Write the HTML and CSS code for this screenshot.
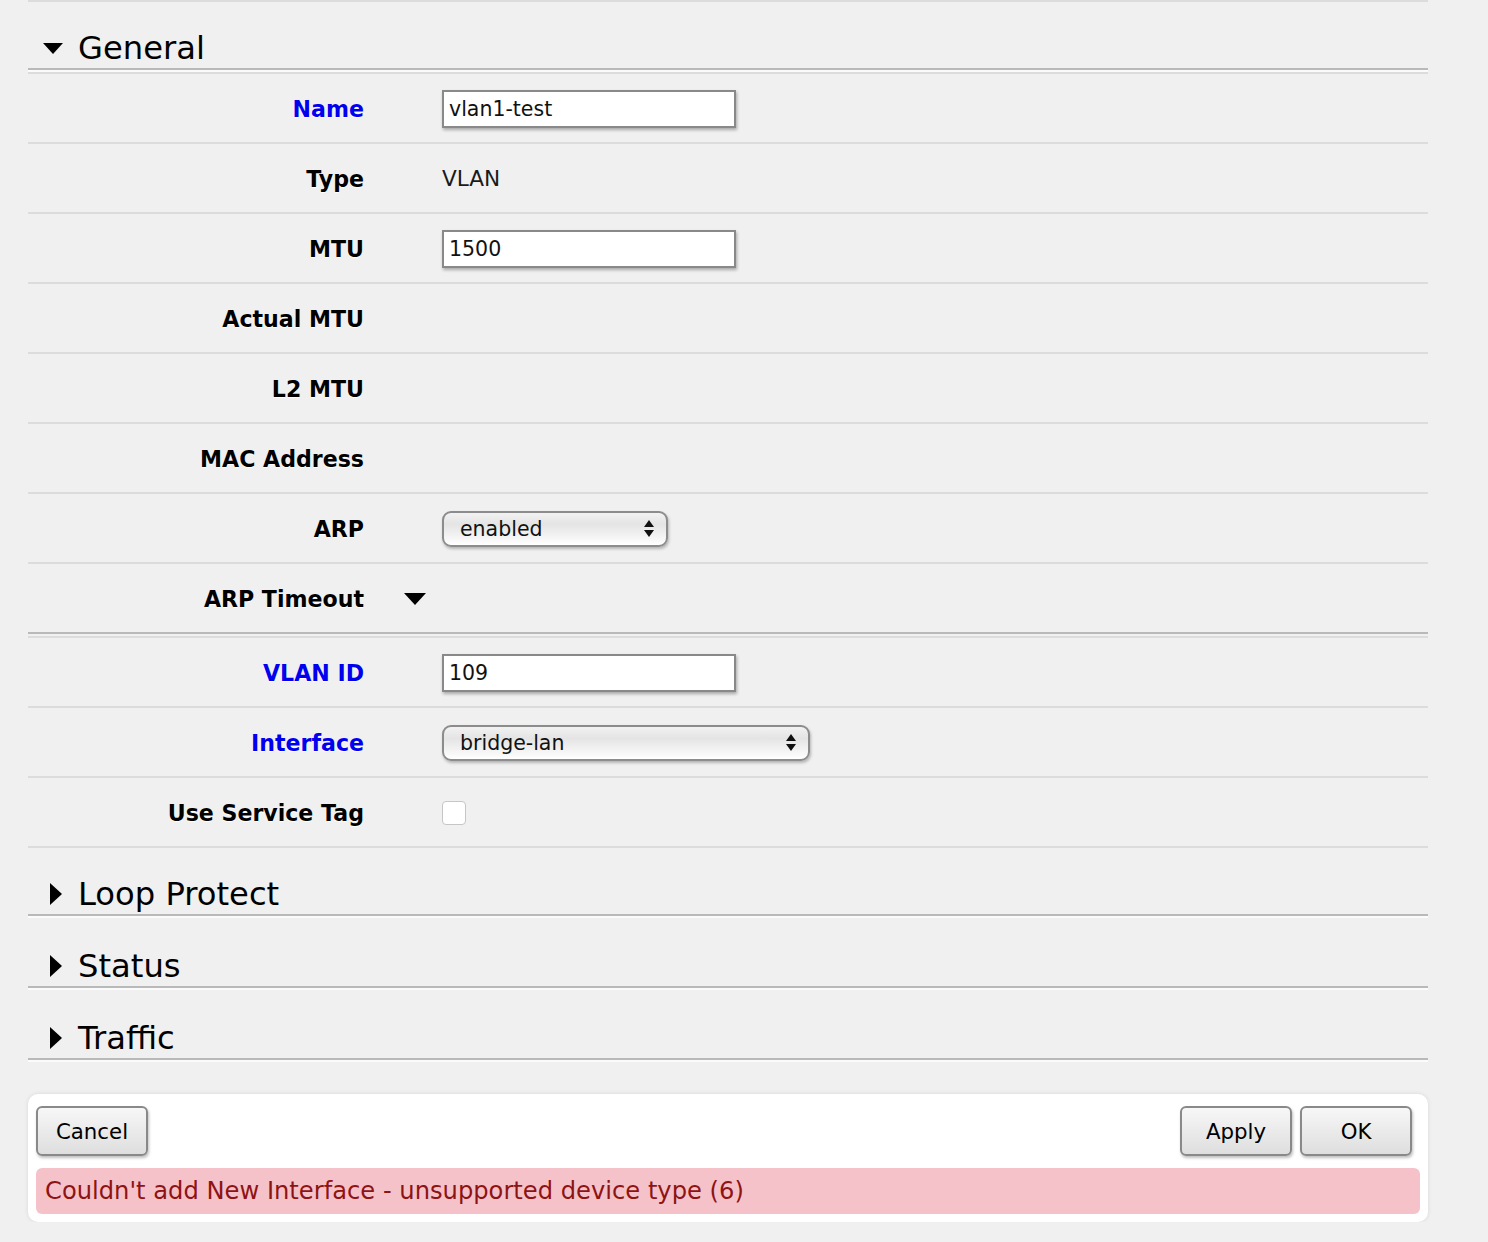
FILE: index.html
```html
<!DOCTYPE html>
<html lang="en">
<head>
    <meta charset="UTF-8">
    <meta name="viewport" content="width=device-width, initial-scale=1.0">
    <title>Interface &lt;vlan1-test&gt;</title>
    <link rel="stylesheet" href="styles.css">
</head>
<body>
    <div class="form">
        <div class="top-rule"></div>

        <div class="section open">
            <div class="section-head"><span class="toggle"><span class="tri-down"></span></span>General</div>
            <div class="section-body">
                <div class="row">
                    <label class="req">Name</label>
                    <div class="gap-cell"></div>
                    <div class="value"><input class="text" type="text" value="vlan1-test"></div>
                </div>
                <div class="row">
                    <label>Type</label>
                    <div class="gap-cell"></div>
                    <div class="value">VLAN</div>
                </div>
                <div class="row">
                    <label>MTU</label>
                    <div class="gap-cell"></div>
                    <div class="value"><input class="text" type="text" value="1500"></div>
                </div>
                <div class="row">
                    <label>Actual MTU</label>
                    <div class="gap-cell"></div>
                    <div class="value"></div>
                </div>
                <div class="row">
                    <label>L2 MTU</label>
                    <div class="gap-cell"></div>
                    <div class="value"></div>
                </div>
                <div class="row">
                    <label>MAC Address</label>
                    <div class="gap-cell"></div>
                    <div class="value"></div>
                </div>
                <div class="row">
                    <label>ARP</label>
                    <div class="gap-cell"></div>
                    <div class="value">
                        <div class="select small">
                            <span>enabled</span>
                            <svg class="arrows" width="10" height="18" viewBox="0 0 10 18"><path d="M5 0 L10 7 L0 7 Z M0 10 L10 10 L5 17 Z" fill="#111"/></svg>
                        </div>
                    </div>
                </div>
                <div class="row sub-head">
                    <label>ARP Timeout</label>
                    <div class="gap-cell"><span class="tri-sub"></span></div>
                    <div class="value"></div>
                </div>
                <div class="sub-body">
                    <div class="row">
                        <label class="req">VLAN ID</label>
                        <div class="gap-cell"></div>
                        <div class="value"><input class="text" type="text" value="109"></div>
                    </div>
                    <div class="row">
                        <label class="req">Interface</label>
                        <div class="gap-cell"></div>
                        <div class="value">
                            <div class="select wide">
                                <span>bridge-lan</span>
                                <svg class="arrows" width="10" height="18" viewBox="0 0 10 18"><path d="M5 0 L10 7 L0 7 Z M0 10 L10 10 L5 17 Z" fill="#111"/></svg>
                            </div>
                        </div>
                    </div>
                    <div class="row">
                        <label>Use Service Tag</label>
                        <div class="gap-cell"></div>
                        <div class="value"><span class="checkbox"></span></div>
                    </div>
                </div>
            </div>
        </div>

        <div class="section">
            <div class="section-head"><span class="toggle"><span class="tri-right"></span></span>Loop Protect</div>
        </div>
        <div class="section">
            <div class="section-head"><span class="toggle"><span class="tri-right"></span></span>Status</div>
        </div>
        <div class="section">
            <div class="section-head"><span class="toggle"><span class="tri-right"></span></span>Traffic</div>
        </div>
    </div>

    <div class="panel">
        <div class="buttons">
            <button class="btn">Cancel</button>
            <div class="buttons-right">
                <button class="btn">Apply</button>
                <button class="btn">OK</button>
            </div>
        </div>
        <div class="error">Couldn't add New Interface - unsupported device type (6)</div>
    </div>
</body>
</html>
```

FILE: styles.css
```css
* {
    box-sizing: border-box;
}

body {
    margin: 0;
    background: #f0f0f0;
    font-family: 'DejaVu Sans', Verdana, sans-serif;
    color: #000;
}

.form {
    width: 1400px;
    margin-left: 28px;
}

.top-rule {
    height: 2px;
    background: #dcdcdc;
}

/* section headers */
.section-head {
    display: flex;
    align-items: flex-end;
    height: 68px;
    padding-bottom: 1px;
    border-bottom: 2px solid #b9b9b9;
    box-shadow: 0 2px 0 #fbfbfb;
    font-size: 32.2px;
    line-height: 38px;
    margin-bottom: 4px;
}

.section.open .section-head {
    margin-bottom: 2px;
}

.toggle {
    display: flex;
    justify-content: flex-end;
    align-items: center;
    width: 35px;
    height: 38px;
    margin-right: 15px;
}

.tri-down {
    width: 0;
    height: 0;
    border-left: 10px solid transparent;
    border-right: 10px solid transparent;
    border-top: 11px solid #000;
}

.tri-right {
    width: 0;
    height: 0;
    margin-right: 1px;
    border-top: 11px solid transparent;
    border-bottom: 11px solid transparent;
    border-left: 12px solid #000;
}

.section-body {
    border-top: 2px solid #dcdcdc;
}

/* rows */
.row {
    display: grid;
    grid-template-columns: 336px 78px 1fr;
    align-items: center;
    height: 70px;
    padding-top: 1px;
    border-bottom: 2px solid #dcdcdc;
}

.row label {
    text-align: right;
    font-weight: bold;
    font-size: 22.1px;
    text-shadow: 0 1px 1px #fff;
}

.row label.req {
    color: #0000ee;
}

.value {
    font-size: 21.6px;
    color: #1a1a1a;
    display: flex;
    align-items: center;
}

.sub-head {
    border-bottom-color: #b9b9b9;
    margin-bottom: 2px;
}

.gap-cell {
    display: flex;
    align-items: center;
    padding-left: 40px;
}

.tri-sub {
    width: 0;
    height: 0;
    border-left: 11px solid transparent;
    border-right: 11px solid transparent;
    border-top: 12px solid #000;
}

.sub-body {
    border-top: 2px solid #dcdcdc;
}

/* inputs */
.text {
    width: 294px;
    height: 38px;
    margin: 0;
    padding: 0 5px;
    border: 2px solid #898989;
    background: #fff;
    font-family: 'DejaVu Sans', Verdana, sans-serif;
    font-size: 20.5px;
    color: #111;
    box-shadow: 1px 2px 3px rgba(0, 0, 0, 0.3);
    outline: none;
}

.select {
    display: flex;
    align-items: center;
    justify-content: space-between;
    height: 36px;
    padding: 0 12px 0 16px;
    border: 2px solid #8c8c8c;
    border-radius: 9px;
    background: linear-gradient(to bottom, #f2f2f2 0%, #e4e4e4 35%, #f4f4f4 75%, #ffffff 100%);
    box-shadow: 1px 2px 3px rgba(0, 0, 0, 0.25);
    font-size: 20.5px;
    color: #111;
}

.select.small {
    width: 226px;
}

.select.wide {
    width: 368px;
}

.arrows {
    display: block;
}

.checkbox {
    display: block;
    width: 24px;
    height: 24px;
    border: 1px solid #c6c6c6;
    border-radius: 4px;
    background: #fff;
}

/* bottom panel */
.panel {
    width: 1400px;
    margin: 34px 0 0 28px;
    padding: 12px 8px 8px 8px;
    background: #fff;
    border-radius: 10px;
    box-shadow: 0 0 4px rgba(0, 0, 0, 0.1);
}

.buttons {
    display: flex;
    justify-content: space-between;
}

.buttons-right {
    display: flex;
    gap: 8px;
    padding-right: 8px;
}

.btn {
    width: 112px;
    height: 50px;
    margin: 0;
    padding-top: 2px;
    border: 2px solid #898989;
    border-radius: 6px;
    background: linear-gradient(to bottom, #f7f7f7, #dedede);
    box-shadow: 1px 2px 3px rgba(0, 0, 0, 0.25);
    font-family: 'DejaVu Sans', Verdana, sans-serif;
    font-size: 21.3px;
    color: #000;
    cursor: pointer;
}

.error {
    display: flex;
    align-items: center;
    height: 46px;
    margin-top: 12px;
    padding-left: 9px;
    background: #f5c2ca;
    border-radius: 6px;
    color: #8e1313;
    font-size: 24.2px;
}
```
